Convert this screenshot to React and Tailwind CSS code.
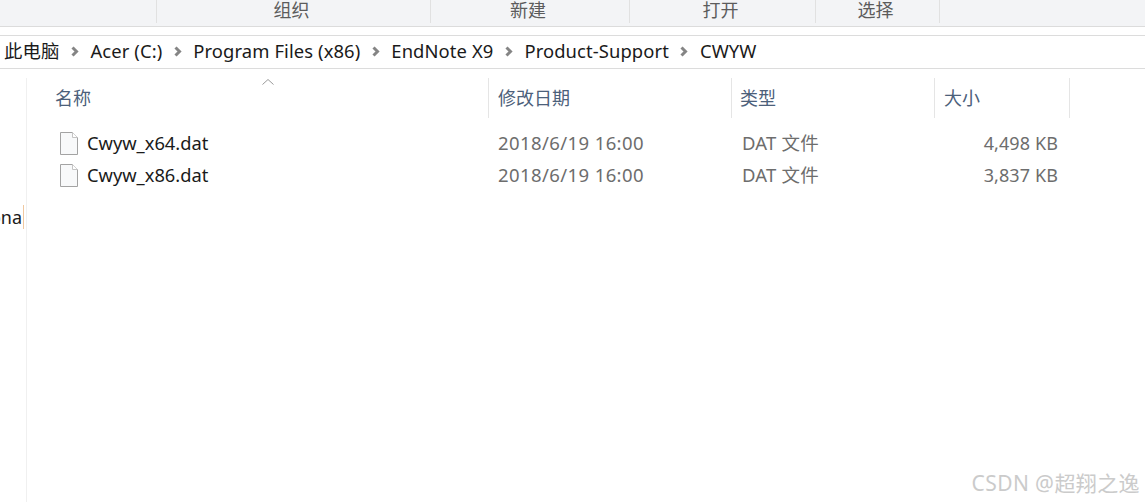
const FONT = "font-['Noto_Sans','Noto_Sans_CJK_SC',sans-serif]";

const tools = [
  { label: '组织', width: 'w-[274px]' },
  { label: '新建', width: 'w-[199px]' },
  { label: '打开', width: 'w-[186px]' },
  { label: '选择', width: 'w-[125px]' },
];

const crumbs = ['此电脑', 'Acer (C:)', 'Program Files (x86)', 'EndNote X9', 'Product-Support', 'CWYW'];

const columns = [
  { label: '名称', width: 'w-[462px]', pad: 'pl-[28px]' },
  { label: '修改日期', width: 'w-[243px]', pad: 'pl-[9px]' },
  { label: '类型', width: 'w-[203px]', pad: 'pl-[8px]' },
  { label: '大小', width: 'w-[135px]', pad: 'pl-[9px]' },
];

const files = [
  { name: 'Cwyw_x64.dat', date: '2018/6/19 16:00', type: 'DAT 文件', size: '4,498 KB' },
  { name: 'Cwyw_x86.dat', date: '2018/6/19 16:00', type: 'DAT 文件', size: '3,837 KB' },
];

const Chevron = () => (
  <svg width="8" height="11" viewBox="0 0 8 11" className="mx-[11.5px] shrink-0">
    <path d="M1.5 1.5 L5.5 5.5 L1.5 9.5" fill="none" stroke="#858585" strokeWidth="3" />
  </svg>
);

const FileIcon = () => (
  <svg width="18" height="23" viewBox="0 0 18 23" className="shrink-0">
    <path d="M0.5 0.5 H12.5 L17.5 5.5 V22.5 H0.5 Z" fill="#f8f9fa" stroke="#a3a3a3" />
    <path d="M12.5 0.5 V5.5 H17.5" fill="#ffffff" stroke="#c4c4c4" />
  </svg>
);

const App = () => {
  return (
    <div className={`relative w-[1145px] h-[502px] overflow-hidden bg-white ${FONT}`}>

      {/* Toolbar */}
      <div className="h-[27px] flex pl-[156px] bg-[#f3f4f6] border-b border-[#dcdcdc]">
        {tools.map((t) => (
          <div
            key={t.label}
            className={`${t.width} h-[23px] pr-[4px] pb-[2px] border-l border-[#e1e1e1] last:border-r flex items-center justify-center text-[18px] leading-[21px] text-[#5c5c5c]`}
          >
            {t.label}
          </div>
        ))}
      </div>

      {/* Address bar */}
      <div className="mt-[8px] h-[34px] flex items-center pl-[4px] border-y border-[#dcdcdc] text-[18.4px] tracking-[0.1px] text-[#1a1a1a]">
        {crumbs.map((c, i) => (
          <div key={c} className="flex items-center">
            {i > 0 && <Chevron />}
            <span className="whitespace-nowrap pb-[2px]">{c}</span>
          </div>
        ))}
      </div>

      <div className="flex h-[433px]">
        {/* Nav pane */}
        <div className="w-[27px] shrink-0 mt-[9px] border-r border-[#f0f0f0]">
          <div className="mt-[127px] w-[24px] pr-[1px] overflow-hidden flex justify-end border-r border-[#f0c8a0] text-[18px] leading-[24px] text-[#1a1a1a]">
            <span className="whitespace-nowrap">ona</span>
          </div>
        </div>

        {/* File list */}
        <div className="flex-1 relative">
          <svg width="14" height="8" viewBox="0 0 14 8" className="absolute left-[234px] top-[9px]">
            <path d="M1.5 6.5 L7 1.5 L12.5 6.5" fill="none" stroke="#9a9a9a" />
          </svg>

          <div className="mt-[9px] h-[40px] flex">
            {columns.map((c) => (
              <div
                key={c.label}
                className={`${c.width} ${c.pad} border-r border-[#e5e5e5] flex items-center text-[18px] text-[#4c607a]`}
              >
                {c.label}
              </div>
            ))}
          </div>

          <div className="mt-[9px] flex flex-col">
            {files.map((f) => (
              <div key={f.name} className="h-[32px] flex items-center text-[18px] whitespace-nowrap">
                <div className="w-[462px] pl-[33px] flex items-center gap-[9px] text-[18.3px] text-[#1a1a1a]">
                  <FileIcon />
                  <span>{f.name}</span>
                </div>
                <div className="w-[243px] pl-[9px] text-[18.5px] tracking-[0.4px] text-[#6d6d6d]">{f.date}</div>
                <div className="w-[203px] pl-[10px] text-[18.5px] tracking-[0.2px] text-[#6d6d6d]">{f.type}</div>
                <div className="w-[123px] text-right tracking-[0.1px] text-[#6d6d6d]">{f.size}</div>
              </div>
            ))}
          </div>
        </div>
      </div>

      {/* Watermark */}
      <div className="absolute right-[5px] bottom-[6px] text-[21px] tracking-[0.4px] leading-[26px] text-[#cbcbcb] whitespace-nowrap">
        CSDN @超翔之逸
      </div>
    </div>
  );
};

export default App;
